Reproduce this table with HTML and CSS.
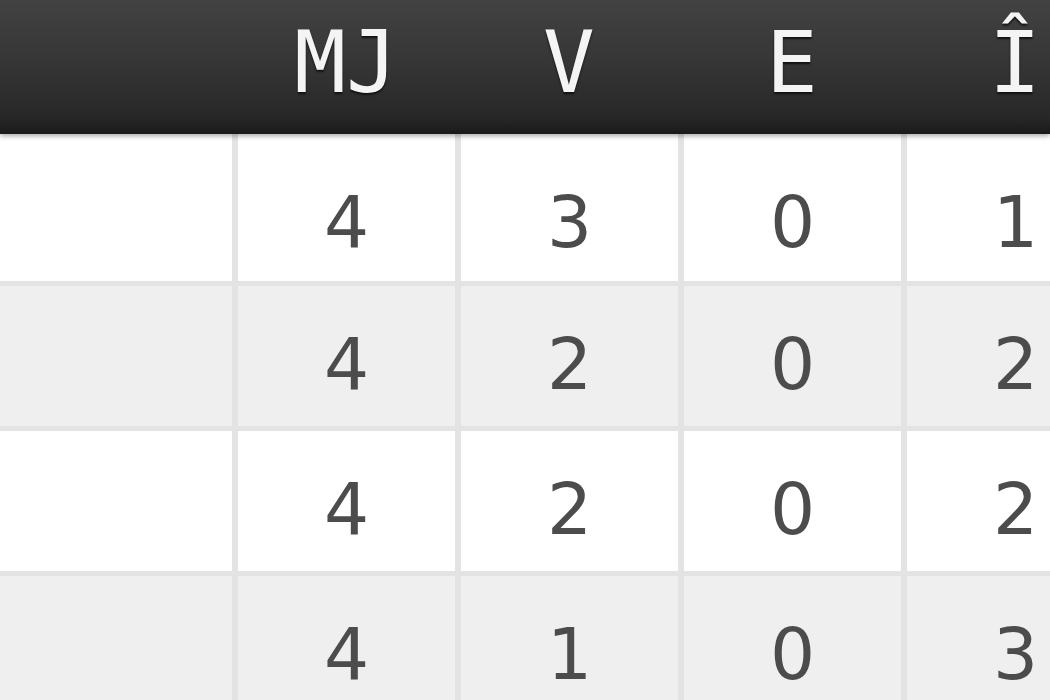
FILE: index.html
```html
<!DOCTYPE html>
<html lang="fr">
<head>
<meta charset="utf-8">
<title>Classement</title>
<link rel="stylesheet" href="styles.css">
</head>
<body>
<div class="standings">
  <div class="head">
    <div class="hcell name"></div>
    <div class="hcell">MJ</div>
    <div class="hcell">V</div>
    <div class="hcell">E</div>
    <div class="hcell">Î</div>
  </div>
  <div class="row first">
    <div class="cell name"></div>
    <div class="cell">4</div>
    <div class="cell">3</div>
    <div class="cell">0</div>
    <div class="cell">1</div>
  </div>
  <div class="row alt">
    <div class="cell name"></div>
    <div class="cell">4</div>
    <div class="cell">2</div>
    <div class="cell">0</div>
    <div class="cell">2</div>
  </div>
  <div class="row">
    <div class="cell name"></div>
    <div class="cell">4</div>
    <div class="cell">2</div>
    <div class="cell">0</div>
    <div class="cell">2</div>
  </div>
  <div class="row alt">
    <div class="cell name"></div>
    <div class="cell">4</div>
    <div class="cell">1</div>
    <div class="cell">0</div>
    <div class="cell">3</div>
  </div>
</div>
</body>
</html>
```

FILE: styles.css
```css
html, body {
  margin: 0;
  padding: 0;
  width: 1050px;
  height: 700px;
  overflow: hidden;
  background: #ffffff;
}

.standings {
  width: 1050px;
  overflow: hidden;
  font-family: "DejaVu Sans", Verdana, sans-serif;
}

.head {
  position: relative;
  z-index: 1;
  display: grid;
  grid-template-columns: 232px repeat(4, 223px);
  height: 134px;
  background: linear-gradient(to bottom, #424242 0%, #363636 45%, #272727 88%, #1a1a1a 100%);
  box-shadow: 0 2px 5px rgba(0, 0, 0, 0.35);
}

.hcell {
  display: flex;
  align-items: flex-start;
  justify-content: center;
  padding-top: 12px;
  padding-left: 5px;
  font-family: "DejaVu Sans Mono", "Liberation Mono", monospace;
  font-size: 86px;
  line-height: 100px;
  color: #f4f4f4;
  text-shadow: 0 2px 2px #111;
}

.hcell.name {
  padding-left: 0;
}

.row {
  display: grid;
  grid-template-columns: 232px repeat(4, 223px);
  height: 140px;
  border-bottom: 5px solid #e3e3e3;
  background: #ffffff;
}

.row.first {
  height: 147px;
}

.row.alt {
  background: #efefef;
}

.cell {
  display: flex;
  align-items: center;
  justify-content: center;
  padding-top: 16px;
  border-left: 6px solid #e3e3e3;
  font-size: 71px;
  color: #4c4c4c;
}

.row.first .cell {
  padding-top: 30px;
}

.cell.name {
  border-left: none;
}
```
